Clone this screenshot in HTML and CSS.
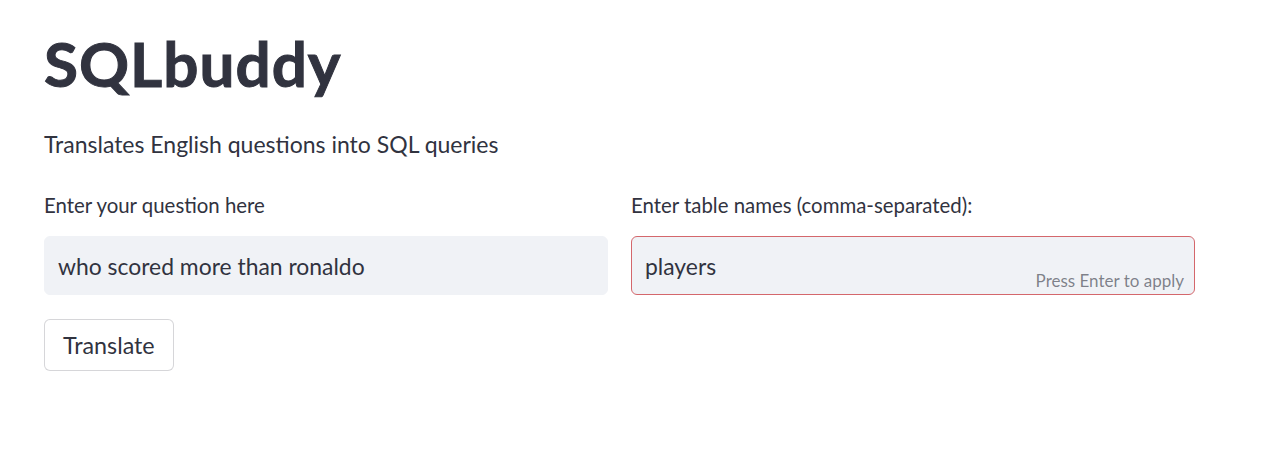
FILE: index.html
```html
<!DOCTYPE html>
<html>
<head>
<meta charset="utf-8">
<link rel="stylesheet" href="styles.css">
</head>
<body>
<main class="app">
  <h1 class="title">SQLbuddy</h1>
  <p class="subtitle">Translates English questions into SQL queries</p>
  <div class="row">
    <div class="field">
      <label class="label">Enter your question here</label>
      <div class="input">
        <span class="value">who scored more than ronaldo</span>
      </div>
    </div>
    <div class="field">
      <label class="label">Enter table names (comma-separated):</label>
      <div class="input input-focus">
        <span class="value">players</span>
        <span class="hint">Press Enter to apply</span>
      </div>
    </div>
  </div>
  <button class="btn">Translate</button>
</main>
</body>
</html>
```

FILE: styles.css
```css
html, body {
  margin: 0;
  background: #ffffff;
}
body {
  font-family: "Lato", "Liberation Sans", sans-serif;
  color: #31333f;
}
.app {
  padding: 25px 74px 0 44px;
  display: flex;
  flex-direction: column;
  align-items: flex-start;
}
.title {
  margin: 0;
  font-size: 62px;
  font-weight: 700;
  line-height: 76px;
  letter-spacing: 1px;
  -webkit-text-stroke: 1px #31333f;
}
.subtitle {
  margin: 28px 0 0 0;
  font-size: 23px;
  line-height: 30px;
}
.row {
  margin-top: 33px;
  width: 100%;
  display: grid;
  grid-template-columns: 1fr 1fr;
  gap: 23px;
}
.field {
  display: flex;
  flex-direction: column;
}
.label {
  font-size: 20.4px;
  line-height: 26px;
  margin-bottom: 18px;
}
.input {
  position: relative;
  height: 59px;
  box-sizing: border-box;
  background: #f0f2f6;
  border: 1px solid #f0f2f6;
  border-radius: 6px;
  display: flex;
  align-items: center;
  padding: 0 13px;
}
.input-focus {
  border-color: #d4676c;
}
.value {
  font-size: 22.9px;
}
.hint {
  position: absolute;
  right: 10px;
  bottom: 3px;
  font-size: 17px;
  color: rgba(49, 51, 63, 0.6);
}
.btn {
  margin-top: 24px;
  height: 52px;
  padding: 0 18px;
  background: #ffffff;
  border: 1px solid rgba(49, 51, 63, 0.2);
  border-radius: 6px;
  font-family: inherit;
  font-size: 23.3px;
  color: #31333f;
}
```
